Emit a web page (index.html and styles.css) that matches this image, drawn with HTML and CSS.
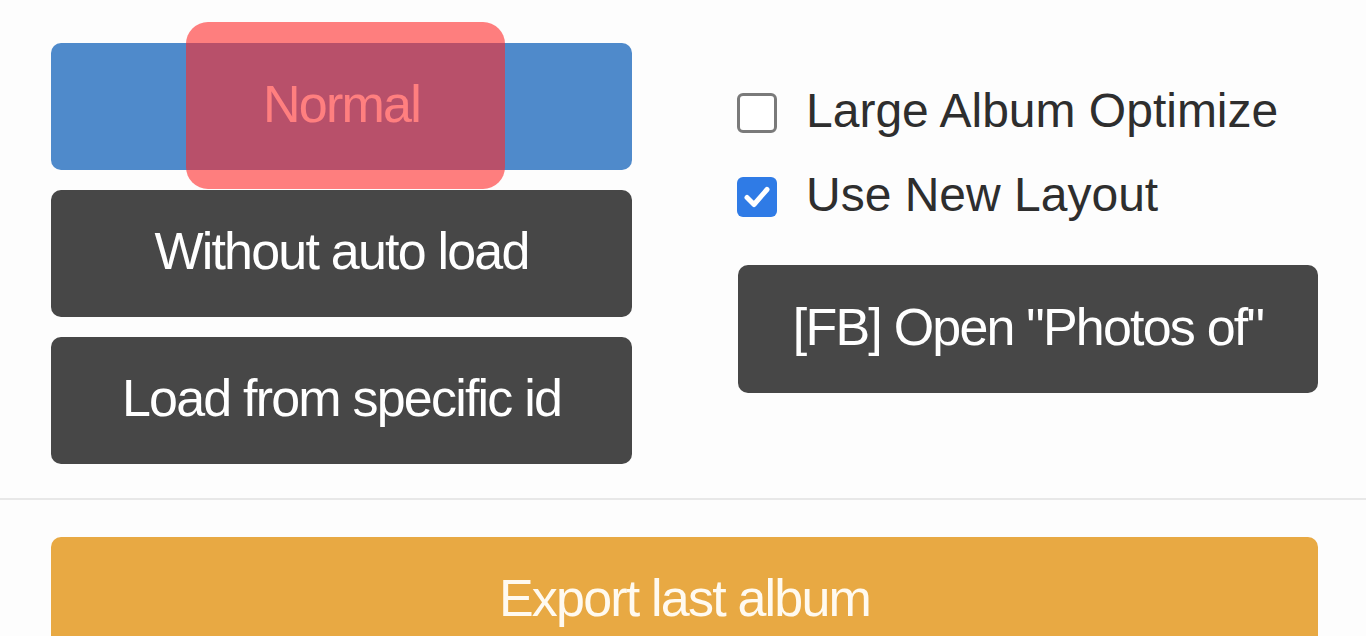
FILE: index.html
```html
<!DOCTYPE html>
<html lang="en">
  <head>
    <meta charset="utf-8">
    <title>Album Exporter</title>
    <link rel="stylesheet" href="styles.css">
  </head>
  <body>

  <div class="panel">
    <div class="modes">
      <div class="mode-wrap">
        <button class="btn btn-blue">Normal</button>
        <div class="highlight"></div>
      </div>
      <button class="btn btn-dark">Without auto load</button>
      <button class="btn btn-dark">Load from specific id</button>
    </div>

    <div class="options">
      <label class="opt">
        <span class="box"></span>
        <span class="opt-text">Large Album Optimize</span>
      </label>
      <label class="opt">
        <span class="box checked">
          <svg viewBox="0 0 40 40" width="40" height="40"><path d="M10 20.5 L17 27.5 L30 12.5" fill="none" stroke="#fff" stroke-width="5" stroke-linecap="round" stroke-linejoin="round"/></svg>
        </span>
        <span class="opt-text">Use New Layout</span>
      </label>
      <button class="btn btn-dark btn-fb">[FB] Open "Photos of"</button>
    </div>
  </div>

  <div class="footer">
    <button class="btn btn-orange">Export last album</button>
  </div>

  </body>
</html>
```

FILE: styles.css
```css
html {
  height: 100%;
}
body {
  margin: 0;
  padding: 0;
  background: #fdfdfd;
  font-family: "Liberation Sans", Arial, sans-serif;
  font-size: 48px;
  color: #2e2e2e;
  overflow: hidden;
}

.panel {
  display: flex;
  gap: 106px;
  padding: 43px 48px 34px 51px;
  border-bottom: 2px solid #e8e8e8;
}

.modes {
  width: 581px;
  display: flex;
  flex-direction: column;
  gap: 20px;
}

.mode-wrap {
  position: relative;
}

.btn {
  display: flex;
  align-items: center;
  justify-content: center;
  width: 100%;
  height: 127px;
  border: 0;
  border-radius: 10px;
  font-family: "Liberation Sans", Arial, sans-serif;
  font-size: 52px;
  letter-spacing: -1.8px;
  color: #ffffff;
  cursor: pointer;
  padding: 0 0 5px 0;
}

.btn-blue {
  background-color: #4f8acb;
}
.btn-dark {
  background-color: #474747;
}
.btn-orange {
  background-color: #e8a943;
  color: #fffaf0;
}

/* red annotation over the first button */
.highlight {
  position: absolute;
  left: 135px;
  top: -21px;
  width: 319px;
  height: 167px;
  border-radius: 22px;
  background-color: rgba(255, 42, 42, 0.6);
}

.options {
  width: 580px;
  display: flex;
  flex-direction: column;
  padding-top: 42px;
}

.opt {
  display: flex;
  align-items: center;
  gap: 29px;
  height: 56px;
  margin-bottom: 28px;
  margin-left: -1px;
}
.opt + .opt {
  margin-bottom: 40px;
}
.opt-text {
  margin-bottom: 6px;
}

.box {
  width: 40px;
  height: 40px;
  box-sizing: border-box;
  border: 3px solid #7a7a7a;
  border-radius: 6px;
  background: #ffffff;
  flex: none;
}
.box.checked {
  border: 0;
  background: #2f7be6;
}
.box svg {
  display: block;
}

.btn-fb {
  height: 128px;
}

.footer {
  padding: 37px 48px 0 51px;
}
```
